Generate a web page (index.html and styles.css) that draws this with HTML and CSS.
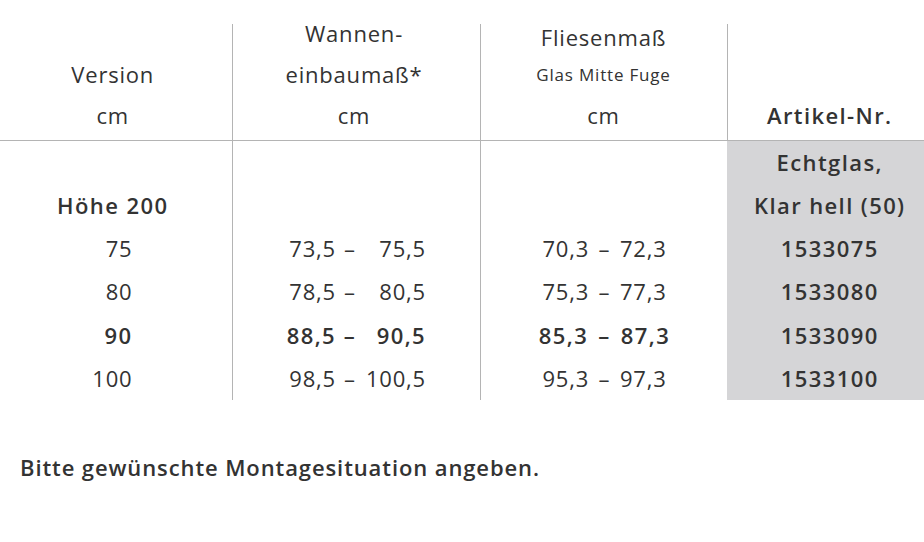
FILE: index.html
```html
<!DOCTYPE html>
<html lang="de">
<head>
  <meta charset="UTF-8" />
  <title>Maßtabelle</title>
  <link rel="stylesheet" href="styles.css">
</head>
<body>

  <table class="tabelle">
    <thead>
      <tr>
        <th class="col-version">
          <div class="kopf">
            <span>Version</span>
            <span>cm</span>
          </div>
        </th>
        <th class="col-wanne">
          <div class="kopf">
            <span>Wannen-</span>
            <span>einbaumaß*</span>
            <span>cm</span>
          </div>
        </th>
        <th class="col-fliese">
          <div class="kopf">
            <span class="fliese-titel">Fliesenmaß</span>
            <span class="klein">Glas Mitte Fuge</span>
            <span>cm</span>
          </div>
        </th>
        <th class="col-artikel">
          <div class="kopf">
            <span class="fett">Artikel-Nr.</span>
          </div>
        </th>
      </tr>
    </thead>
    <tbody>
      <tr>
        <td></td>
        <td class="linie"></td>
        <td class="linie"></td>
        <td class="artikel fett">Echtglas,</td>
      </tr>
      <tr>
        <td class="version fett hoehe">Höhe 200</td>
        <td class="linie"></td>
        <td class="linie"></td>
        <td class="artikel fett">Klar hell (50)</td>
      </tr>
      <tr>
        <td class="version nummer">75</td>
        <td class="linie"><span class="bereich"><span>73,5</span><span>–</span><span>75,5</span></span></td>
        <td class="linie fliese">70,3 – 72,3</td>
        <td class="artikel fett">1533075</td>
      </tr>
      <tr>
        <td class="version nummer">80</td>
        <td class="linie"><span class="bereich"><span>78,5</span><span>–</span><span>80,5</span></span></td>
        <td class="linie fliese">75,3 – 77,3</td>
        <td class="artikel fett">1533080</td>
      </tr>
      <tr class="fett">
        <td class="version nummer">90</td>
        <td class="linie"><span class="bereich"><span>88,5</span><span>–</span><span>90,5</span></span></td>
        <td class="linie fliese">85,3 – 87,3</td>
        <td class="artikel">1533090</td>
      </tr>
      <tr>
        <td class="version nummer">100</td>
        <td class="linie"><span class="bereich"><span>98,5</span><span>–</span><span>100,5</span></span></td>
        <td class="linie fliese">95,3 – 97,3</td>
        <td class="artikel fett">1533100</td>
      </tr>
    </tbody>
  </table>

  <p class="hinweis">Bitte gewünschte Montagesituation angeben.</p>

</body>
</html>
```

FILE: styles.css
```css
* {
  box-sizing: border-box;
  margin: 0;
  padding: 0;
}

body {
  font-family: "Open Sans", Arial, sans-serif;
  background: #fff;
  color: #333;
  width: 924px;
  height: 542px;
  overflow: hidden;
}

.tabelle {
  border-collapse: collapse;
  width: 100%;
  margin-top: 24px;
  font-size: 22px;
  letter-spacing: 0.8px;
  table-layout: fixed;
}

.col-version { width: 232px; }
.col-wanne { width: 248px; }
.col-fliese { width: 247px; }

th {
  font-weight: 400;
  padding: 0;
  vertical-align: bottom;
  border-bottom: 1px solid #b4b4b4;
}

th + th {
  border-left: 1px solid #b4b4b4;
}

.kopf {
  height: 116px;
  display: flex;
  flex-direction: column;
  justify-content: flex-end;
  align-items: center;
  line-height: 41px;
  padding-bottom: 4px;
}

.col-version .kopf {
  padding-right: 6px;
}

.col-wanne .kopf {
  padding-right: 4px;
}

.col-artikel .kopf {
  padding-left: 8px;
}

.fliese-titel {
  position: relative;
  top: 4px;
}

.klein {
  font-size: 17px;
  letter-spacing: 0.8px;
}

td {
  height: 43.2px;
  padding: 0;
  text-align: center;
  white-space: nowrap;
  line-height: 43px;
}

.linie {
  border-left: 1px solid #b4b4b4;
}

.fett {
  font-weight: 600;
  letter-spacing: 1.4px;
}

.version {
  padding-right: 6px;
}

.nummer {
  text-align: right;
  padding-right: 99px;
}

.hoehe {
  padding-right: 6px;
}

.fliese {
  word-spacing: 3px;
  padding-left: 2px;
}

.artikel {
  background: #d5d5d7;
  border-left: 1px solid #d5d5d7;
  padding-left: 8px;
}

.bereich {
  display: inline-grid;
  grid-template-columns: 50px 28px 62px;
  text-align: right;
}

.bereich span:nth-child(2) {
  text-align: center;
}

.hinweis {
  margin-top: 52px;
  margin-left: 20px;
  font-size: 22px;
  font-weight: 600;
  letter-spacing: 0.9px;
  color: #333;
}
```
